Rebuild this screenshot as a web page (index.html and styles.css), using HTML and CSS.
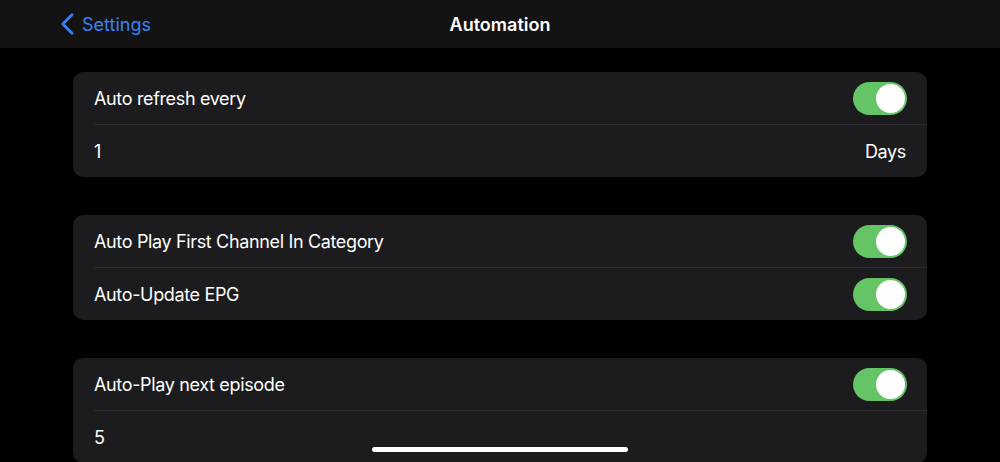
FILE: index.html
```html
<!DOCTYPE html>
<html>
<head>
<meta charset="utf-8">
<link rel="stylesheet" href="styles.css">
</head>
<body>
<header class="nav">
  <div class="back">
    <svg class="chev" width="14" height="22" viewBox="0 0 14 22"><path d="M12 1.8 L2.8 11 L12 20.2" fill="none" stroke="#3b82f6" stroke-width="2.8" stroke-linecap="round" stroke-linejoin="round"/></svg>
    <span>Settings</span>
  </div>
  <div class="title">Automation</div>
</header>
<main class="content">
  <section class="card">
    <div class="row"><span>Auto refresh every</span><span class="toggle"><span class="knob"></span></span></div>
    <div class="row"><span>1</span><span class="value">Days</span></div>
  </section>
  <section class="card">
    <div class="row"><span>Auto Play First Channel In Category</span><span class="toggle"><span class="knob"></span></span></div>
    <div class="row"><span>Auto-Update EPG</span><span class="toggle"><span class="knob"></span></span></div>
  </section>
  <section class="card">
    <div class="row"><span>Auto-Play next episode</span><span class="toggle"><span class="knob"></span></span></div>
    <div class="row"><span>5</span></div>
  </section>
</main>
<div class="home"></div>
</body>
</html>
```
FILE: styles.css
```css
html, body {
  margin: 0;
  padding: 0;
  background: #000;
  width: 1000px;
  height: 462px;
  overflow: hidden;
  font-family: Inter, "Liberation Sans", sans-serif;
  color: #fff;
}
.nav {
  height: 48px;
  background: #131313;
  position: relative;
  display: flex;
  align-items: center;
  justify-content: center;
}
.back {
  position: absolute;
  left: 60px;
  top: 0;
  height: 48px;
  display: flex;
  align-items: center;
  gap: 8px;
  color: #3b82f6;
  font-size: 18px;
}
.title {
  font-size: 18px;
  font-weight: 600;
}
.content {
  padding: 24px 73px 0;
  display: flex;
  flex-direction: column;
  gap: 38px;
}
.card {
  background: #1c1c1e;
  border-radius: 10px;
  padding-left: 21px;
}
.row {
  height: 52px;
  display: flex;
  align-items: center;
  justify-content: space-between;
  padding-right: 20px;
  font-size: 18px;
  letter-spacing: -0.35px;
}
.row + .row {
  border-top: 1px solid #2c2c2e;
}
.value {
  padding-right: 1px;
}
.toggle {
  width: 54px;
  height: 33px;
  border-radius: 17px;
  background: #65c466;
  position: relative;
  display: block;
}
.knob {
  position: absolute;
  right: 2px;
  top: 2px;
  width: 29px;
  height: 29px;
  border-radius: 50%;
  background: #fff;
}
.home {
  position: absolute;
  left: 372px;
  top: 447px;
  width: 256px;
  height: 5px;
  border-radius: 3px;
  background: #fff;
}
```
